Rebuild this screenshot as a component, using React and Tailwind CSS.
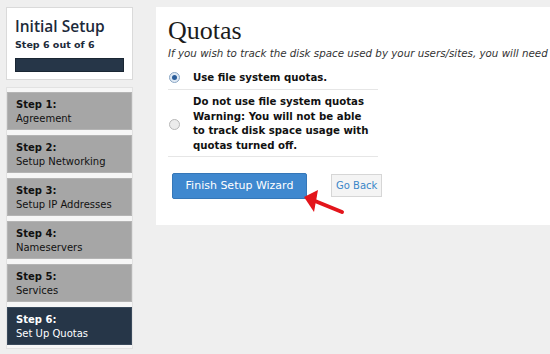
import { useState } from 'react'

const steps = [
  { n: 1, label: 'Agreement' },
  { n: 2, label: 'Setup Networking' },
  { n: 3, label: 'Setup IP Addresses' },
  { n: 4, label: 'Nameservers' },
  { n: 5, label: 'Services' },
  { n: 6, label: 'Set Up Quotas', active: true },
]

function Radio({ checked }) {
  return (
    <span
      className={
        'shrink-0 w-[11px] h-[11px] rounded-full border flex items-center justify-center ' +
        (checked ? 'border-[#8aa6c4] bg-[#dfe9f4]' : 'border-[#b8b8b8] bg-[#ececec]')
      }
    >
      {checked && <span className="w-[5px] h-[5px] rounded-full bg-[#2a5d9a]" />}
    </span>
  )
}

export default function App() {
  const [useQuotas, setUseQuotas] = useState(true)

  return (
    <div
      className="w-[550px] h-[354px] overflow-hidden bg-[#efefef] flex gap-[23px] pt-[7px] pl-[6px] text-[#111]"
      style={{ fontFamily: '"DejaVu Sans", Verdana, sans-serif' }}
    >
      {/* Sidebar */}
      <div className="w-[127px] shrink-0 flex flex-col gap-[7px]">
        <div className="bg-white border border-[#dadada] h-[73px] px-[8px] pt-[8px]">
          <h1
            className="text-[15.5px] leading-[20px] font-semibold text-[#1c2a3a]"
            style={{ fontFamily: '"Open Sans", sans-serif' }}
          >
            Initial Setup
          </h1>
          <p className="text-[9.5px] leading-[14px] font-bold text-[#1c2a3a] mt-[2px]">Step 6 out of 6</p>
          <div className="mt-[6px] h-[14px] bg-[#263648] border border-[#1a2633]" />
        </div>

        <div className="bg-[#f6f6f6] border border-[#e2e2e2] pt-[4px] flex flex-col gap-[5px] h-[262px]">
          {steps.map((s) => (
            <div
              key={s.n}
              className={
                'h-[38px] px-[8px] pt-[4px] border ' +
                (s.active
                  ? 'bg-[#263648] border-[#3a4a5c] text-white'
                  : 'bg-[#a6a6a6] border-[#b4b4b4] text-[#111]')
              }
            >
              <div className="text-[10px] leading-[15px] font-bold">Step {s.n}:</div>
              <div className="text-[10px] leading-[14px]">{s.label}</div>
            </div>
          ))}
        </div>
      </div>

      {/* Main panel */}
      <div className="flex-1 flex flex-col">
        <div className="bg-white h-[218px] pl-[12px] pt-[11px] whitespace-nowrap">
          <h2
            className="text-[26px] leading-[26px] text-[#1c1c1c]"
            style={{ fontFamily: '"Liberation Serif", "Times New Roman", serif' }}
          >
            Quotas
          </h2>
          <p className="text-[10.3px] leading-[14px] italic text-[#333] mt-[2px]">
            If you wish to track the disk space used by your users/sites, you will need
          </p>

          <div className="w-[210px] mt-[6px]">
            <label
              className="flex items-center gap-[13px] pl-[1px] h-[24px] border-b border-[#e6e6e6] cursor-pointer"
              onClick={() => setUseQuotas(true)}
            >
              <Radio checked={useQuotas} />
              <span className="text-[10.2px] font-bold">Use file system quotas.</span>
            </label>
            <label
              className="flex items-center gap-[13px] pl-[1px] pt-[5px] pb-[3px] border-b border-[#e6e6e6] cursor-pointer"
              onClick={() => setUseQuotas(false)}
            >
              <Radio checked={!useQuotas} />
              <span className="text-[10.2px] leading-[14.5px] font-bold">
                Do not use file system quotas
                <br />
                Warning: You will not be able
                <br />
                to track disk space usage with
                <br />
                quotas turned off.
              </span>
            </label>
          </div>

          <div className="flex items-center gap-[24px] mt-[15px] pl-[4px]">
            <div className="relative">
              <button className="w-[135px] h-[26px] rounded-[2px] bg-[#3f88cf] border border-[#3577b8] text-white text-[11px]">
                Finish Setup Wizard
              </button>
              <svg
                className="absolute left-[131px] top-[16px]"
                width="44"
                height="30"
                viewBox="0 0 44 30"
              >
                <path d="M39 24 L12 13" stroke="#e3151b" strokeWidth="4" strokeLinecap="round" />
                <path d="M1 9 L15 2 L11 24 Z" fill="#e3151b" />
              </svg>
            </div>
            <button className="h-[23px] px-[4px] bg-[#f4f4f4] border border-[#d6d6d6] text-[#3a86c8] text-[10px]">
              Go Back
            </button>
          </div>
        </div>
      </div>
    </div>
  )
}
